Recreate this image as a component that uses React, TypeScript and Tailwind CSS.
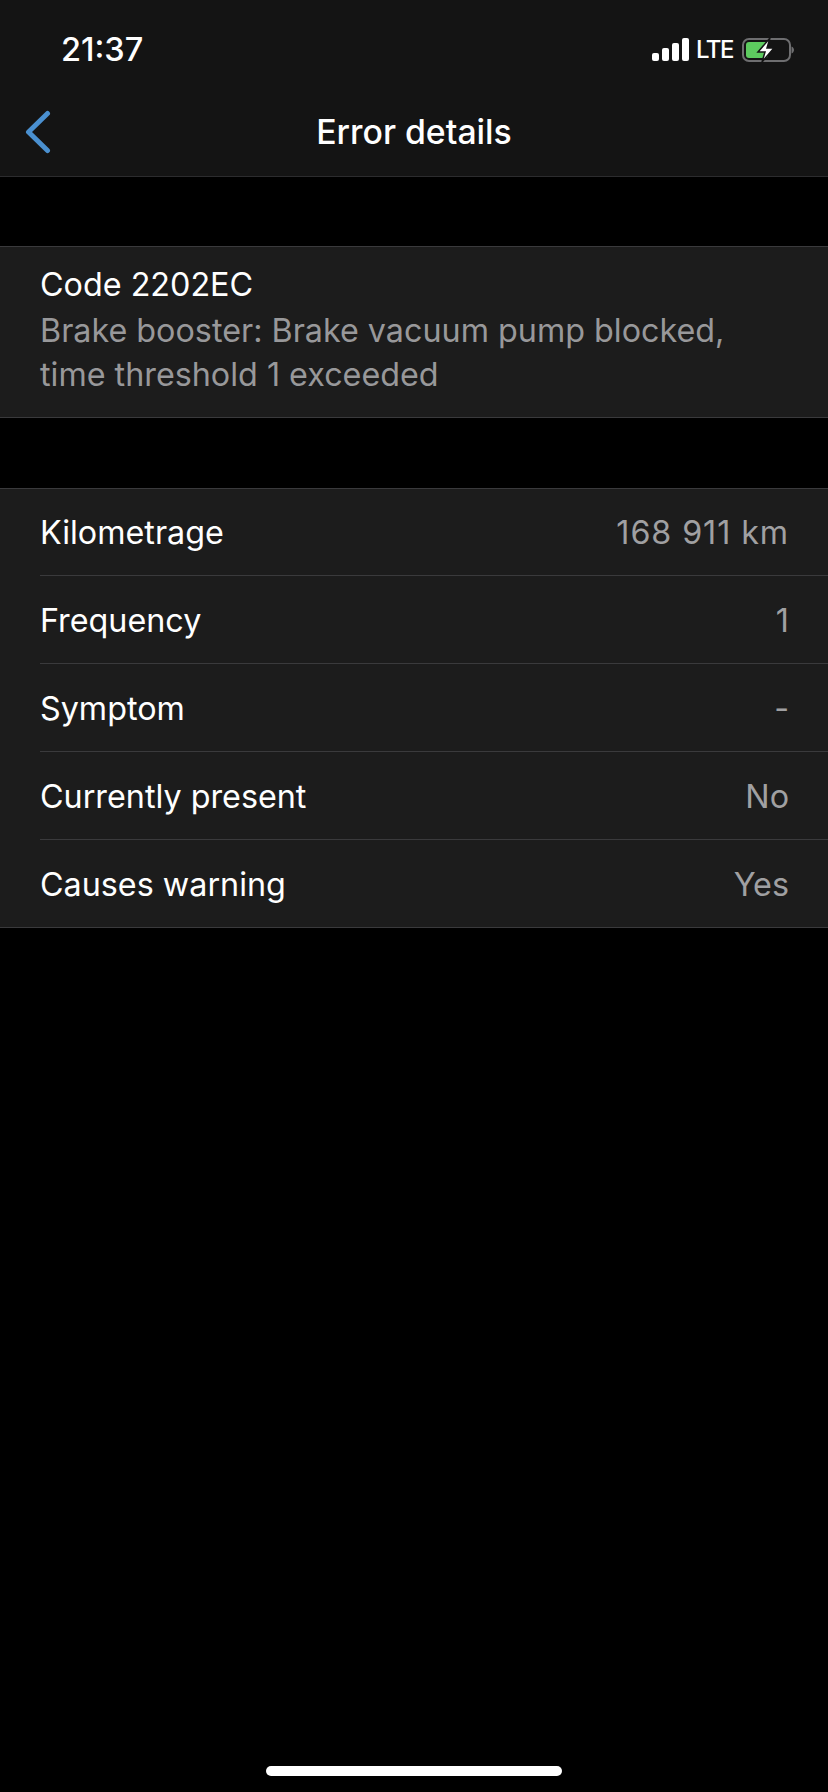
import React from "react";

function Row({ label, value, height, divider, valueClass }: { label: string; value: string; height: string; divider: string; valueClass: string }) {
  return (
    <div className="pl-[40px]">
      <div className={`flex items-center justify-between pt-[3px] pr-[39px] ${height} ${divider}`}>
        <span className="text-white">{label}</span>
        <span className={`text-[#a0a0a2] ${valueClass}`}>{value}</span>
      </div>
    </div>
  );
}

function StatusIcons() {
  return (
    <div className="flex items-center">
      <svg width="37" height="24" viewBox="0 0 37 24" fill="#fff">
        <rect x="0" y="15" width="7" height="8" rx="2" />
        <rect x="10" y="10" width="7" height="13" rx="2" />
        <rect x="20" y="5" width="7" height="18" rx="2" />
        <rect x="30" y="0" width="7" height="23" rx="2" />
      </svg>
      <span className="ml-[7px] text-[24px] leading-[24px] font-medium tracking-[-1.500px] text-white">LTE</span>
      <svg className="ml-[9px]" width="52" height="26" viewBox="0 0 52 26">
        <rect x="1" y="2" width="47" height="22" rx="6" fill="none" stroke="#6e6e70" strokeWidth="2" />
        <rect x="4" y="5" width="22" height="16" rx="3" fill="#5dcb5f" />
        <path d="M49.500 9.500v7c1.600-.6 2.500-2 2.500-3.500s-.9-2.900-2.500-3.500z" fill="#6e6e70" />
        <path d="M28 1 16 15h7l-3 10 12-14h-7z" fill="#fff" stroke="#141414" strokeWidth="1.500" />
      </svg>
    </div>
  );
}

export default function App() {
  return (
    <div className="flex h-[1792px] w-[828px] flex-col bg-black text-[32.300px] font-['Inter','Liberation_Sans',sans-serif]">
      <header className="h-[177px] border-b border-[#2c2c2e] bg-[#141414]">
        <div className="flex h-[88px] items-center justify-between pt-[12px] pr-[34px] pl-[61px]">
          <span className="text-[32.500px] leading-none font-medium text-white">21:37</span>
          <StatusIcons />
        </div>
        <div className="relative flex h-[88px] items-center justify-center">
          <svg className="absolute top-[20px] left-[24px]" width="28" height="46" viewBox="0 0 28 46" fill="none">
            <path d="M23.500 5.500 4.500 24 23.500 42.500" stroke="#4a90d0" strokeWidth="5" strokeLinecap="round" strokeLinejoin="round" />
          </svg>
          <h1 className="text-[33.800px] font-medium text-white">Error details</h1>
        </div>
      </header>
      <section className="mt-[69px] h-[172px] border-y border-[#3a3a3c] bg-[#1c1c1c] pt-[16px] pl-[40px]">
        <div className="leading-[44px] text-white">Code 2202EC</div>
        <p className="mt-[2px] leading-[44px] text-[#98989a]">
          Brake booster: Brake vacuum pump blocked,
          <br />
          time threshold 1 exceeded
        </p>
      </section>
      <section className="mt-[70px] border-y border-[#3a3a3c] bg-[#1c1c1c]">
        <Row label="Kilometrage" value="168 911 km" height="h-[87px]" divider="border-b border-[#3a3a3c]" valueClass="tracking-[0.9px]" />
        <Row label="Frequency" value="1" height="h-[88px]" divider="border-b border-[#3a3a3c]" valueClass="" />
        <Row label="Symptom" value="-" height="h-[88px]" divider="border-b border-[#3a3a3c]" valueClass="" />
        <Row label="Currently present" value="No" height="h-[88px]" divider="border-b border-[#3a3a3c]" valueClass="" />
        <Row label="Causes warning" value="Yes" height="h-[87px]" divider="" valueClass="" />
      </section>
      <div className="mt-auto mb-[16px] flex justify-center">
        <div className="h-[10px] w-[296px] rounded-full bg-white" />
      </div>
    </div>
  );
}
